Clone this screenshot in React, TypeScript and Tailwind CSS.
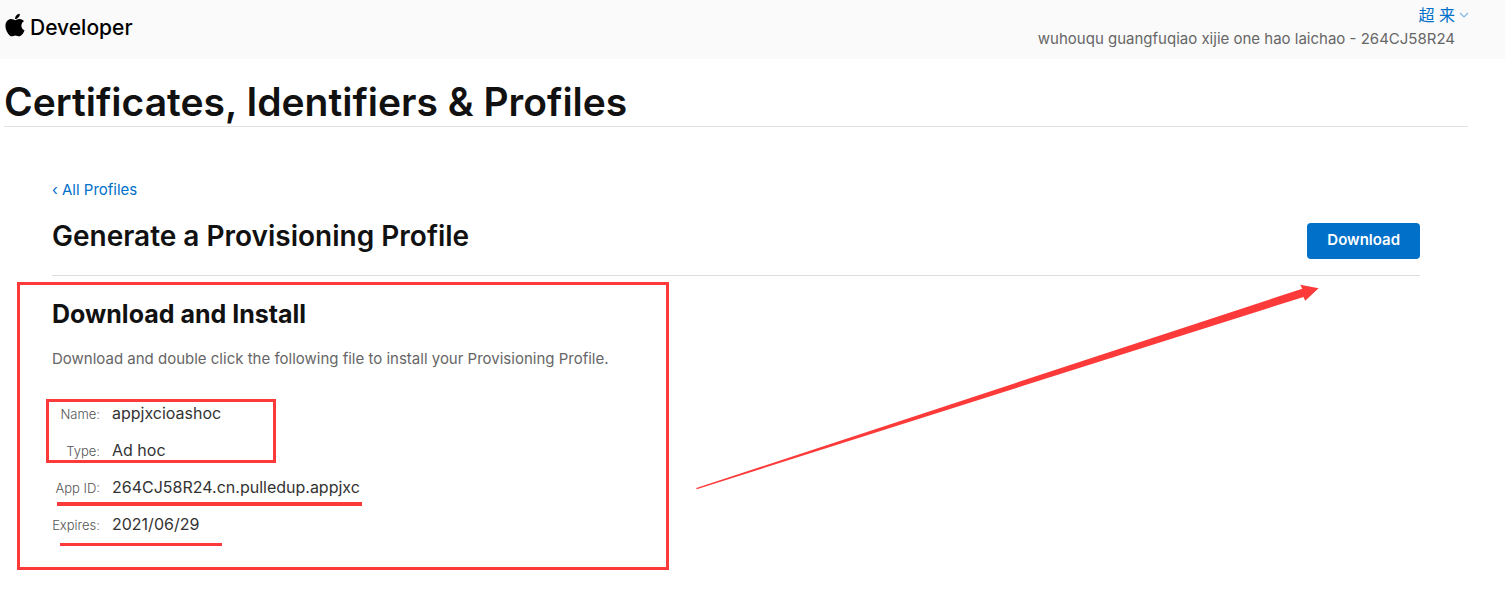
import { FaApple } from "react-icons/fa";

const details = [
  { label: "Name:", value: "appjxcioashoc" },
  { label: "Type:", value: "Ad hoc" },
  { label: "App ID:", value: "264CJ58R24.cn.pulledup.appjxc" },
  { label: "Expires:", value: "2021/06/29" },
];

function Header() {
  return (
    <header className="flex items-start justify-between bg-[#fafafa] pt-[3px] pr-9 pb-2 pl-1">
      <a href="#" className="flex items-start pt-[9px] pl-px text-black">
        <FaApple className="mr-[5px] h-[26px] w-5" aria-hidden="true" />
        <span className="text-[21px] leading-8 font-medium">Developer</span>
      </a>
      <div className="flex flex-col items-end">
        <button type="button" className="flex items-center gap-1 text-base leading-6 text-[#0070c9]">
          超 来
          <svg className="w-2.5" viewBox="0 0 10 6" fill="none" stroke="#80b7e4" strokeWidth="1.2" aria-hidden="true">
            <path d="M1 1 L5 5 L9 1" />
          </svg>
        </button>
        <p className="pr-3.5 text-[15px] leading-6 text-[#666]">
          wuhouqu guangfuqiao xijie one hao laichao - 264CJ58R24
        </p>
      </div>
    </header>
  );
}

function Annotations() {
  return (
    <div className="pointer-events-none absolute inset-0" aria-hidden="true">
      <div className="absolute top-[282px] left-[17px] h-[288px] w-[652px] border-3 border-[#fc3a3a]" />
      <div className="absolute top-[399px] left-[46px] h-16 w-[230px] border-3 border-[#fc3a3a]" />
      <div className="absolute top-[502px] left-[57px] h-1 w-[305px] bg-[#fc3a3a]" />
      <div className="absolute top-[543px] left-[60px] h-[3px] w-[162px] bg-[#fc3a3a]" />
      <svg className="absolute top-[280px] left-[690px]" width="640" height="216" viewBox="690 280 640 216">
        <path
          d="M696.3 488 L1302.3 288.7 L1300.2 284.8 L1318.6 288.2 L1305.2 300.8 L1303.5 297 L696.7 489.2 Z"
          fill="#fc3a3a"
        />
      </svg>
    </div>
  );
}

export default function App() {
  return (
    <div className="relative bg-white font-['Inter','Noto_Sans_CJK_SC',sans-serif] text-[#111]">
      <Header />
      <main className="pr-9 pb-8 pl-1">
        <h1 className="mr-px border-b border-[#e3e3e3] pt-[19px] text-[39px] leading-[48px] font-semibold">
          Certificates, Identifiers &amp; Profiles
        </h1>
        <div className="pr-[49px] pl-12 pt-[51px]">
          <a href="#" className="block text-[15px] leading-6 text-[#0070c9]">
            ‹ All Profiles
          </a>
          <div className="mt-4 flex items-start justify-between border-b border-[#ddd] pb-4">
            <h2 className="text-[28px] leading-9 font-semibold">Generate a Provisioning Profile</h2>
            <button
              type="button"
              className="mt-[5px] h-9 rounded bg-[#0070c9] px-5 pb-0.5 text-[15px] font-semibold text-white"
            >
              Download
            </button>
          </div>
          <h3 className="mt-5 text-[25px] leading-9 font-bold">Download and Install</h3>
          <p className="mt-[15px] text-[15px] leading-6 text-[#666]">
            Download and double click the following file to install your Provisioning Profile.
          </p>
          <dl className="mt-6">
            {details.map(({ label, value }) => (
              <div key={label} className="flex h-[37px] items-baseline gap-3 leading-[37px]">
                <dt className="w-12 text-right text-[13px] font-light whitespace-nowrap text-[#555]">{label}</dt>
                <dd className="text-base leading-[37px] text-[#333]">{value}</dd>
              </div>
            ))}
          </dl>
        </div>
      </main>
      <Annotations />
    </div>
  );
}
